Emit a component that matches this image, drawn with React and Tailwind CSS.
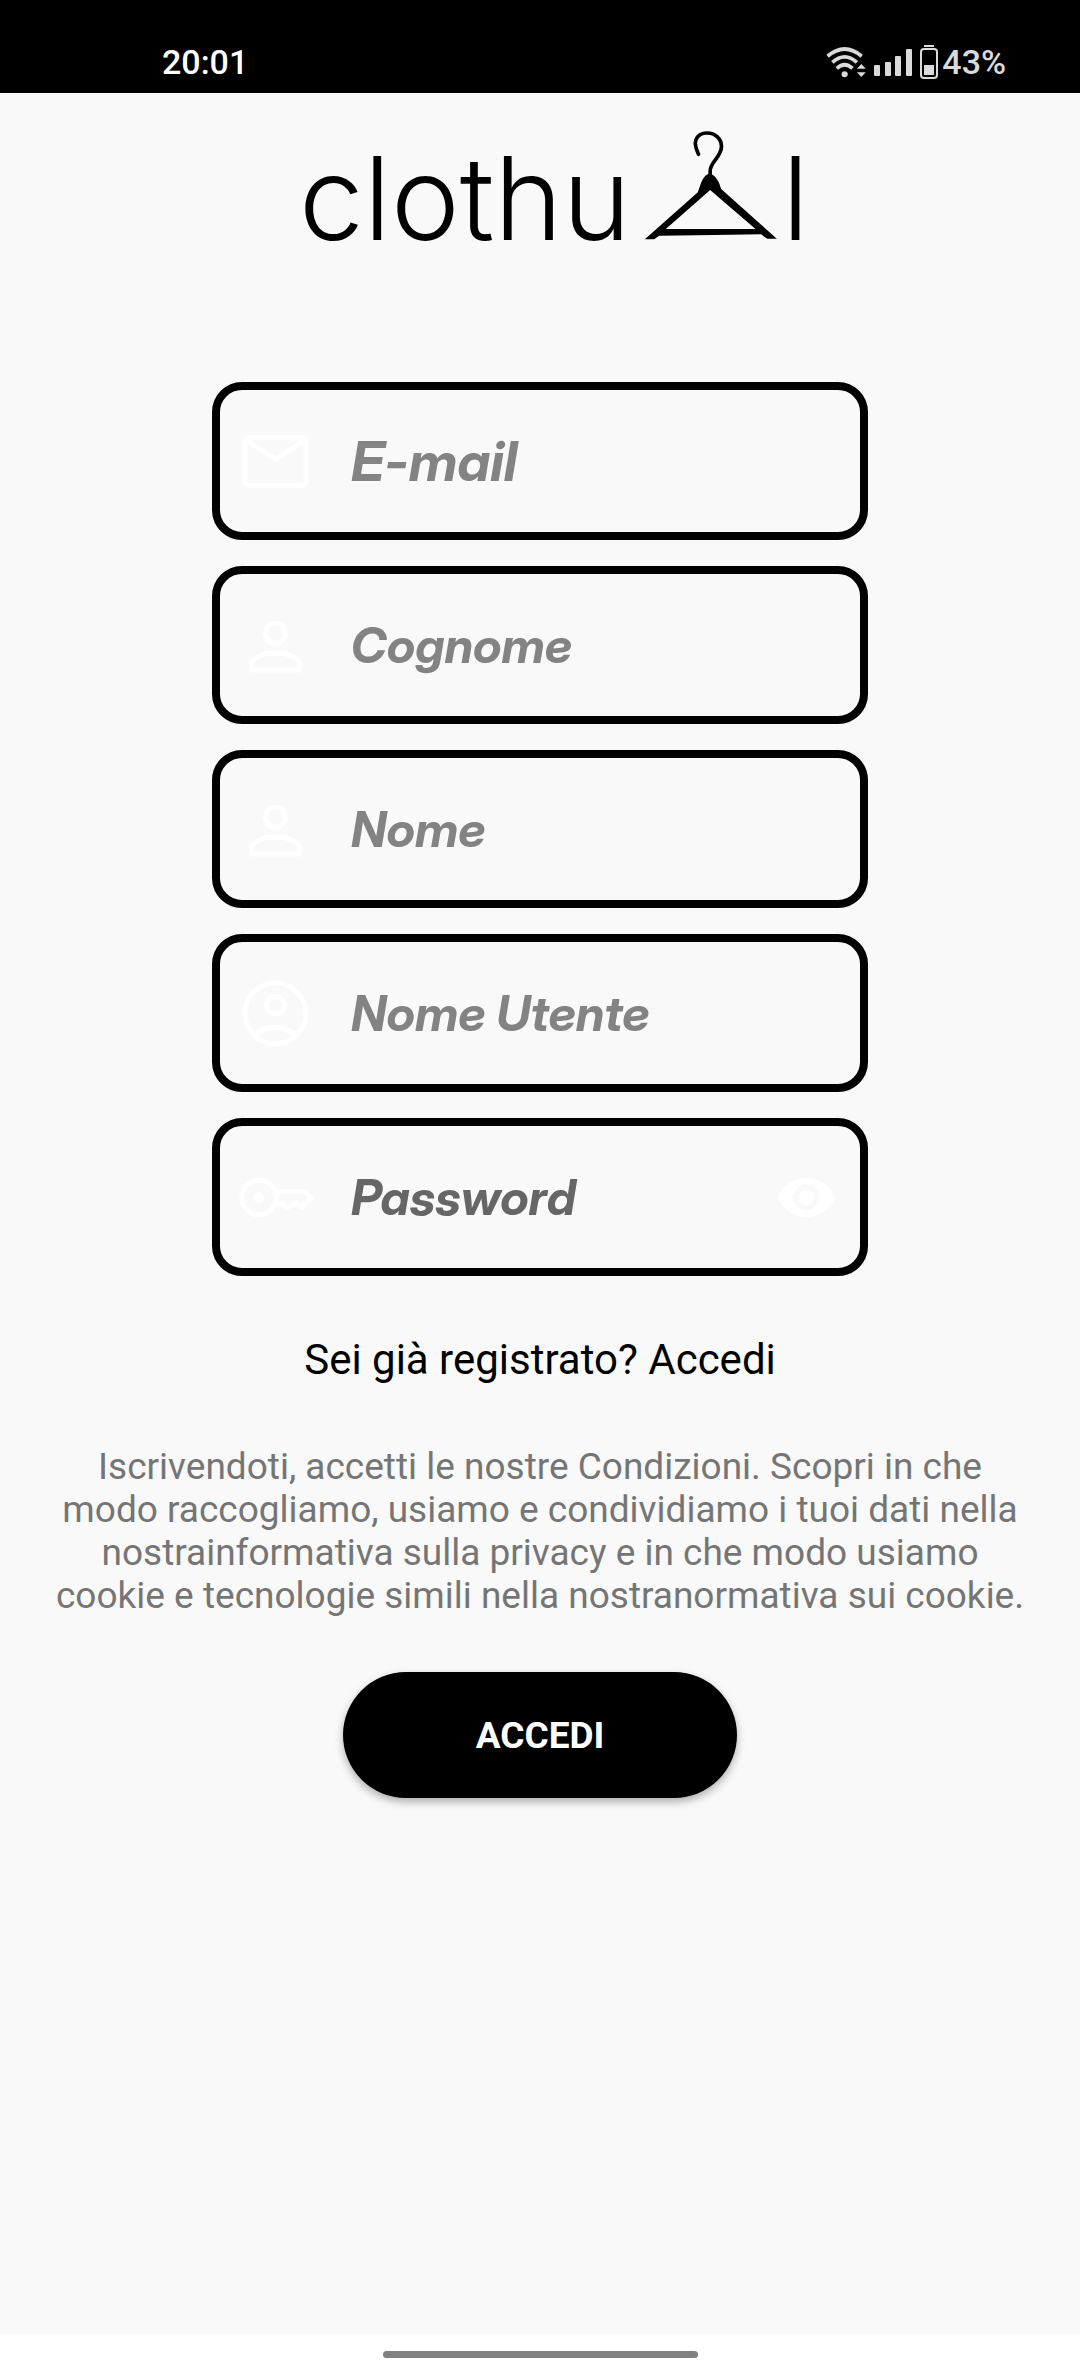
import { useState } from "react";
import { MdVisibility } from "react-icons/md";

function LineIcon({ className, children }) {
  return (
    <svg viewBox="0 0 24 24" fill="none" stroke="currentColor" strokeWidth="1.5" className={className} aria-hidden="true">
      {children}
    </svg>
  );
}

function MailIcon({ className }) {
  return (
    <LineIcon className={className}>
      <rect x="2.75" y="4.75" width="18.5" height="14.5" rx="1" />
      <path d="M3 5.500L12 11.300L21 5.500" />
    </LineIcon>
  );
}

function PersonIcon({ className }) {
  return (
    <LineIcon className={className}>
      <circle cx="12" cy="8.300" r="3.050" />
      <path d="M4.750 19.450V17.600C4.750 15.700 8.500 14.300 12 14.300S19.250 15.700 19.250 17.600V19.450Z" />
    </LineIcon>
  );
}

function AccountIcon({ className }) {
  return (
    <LineIcon className={className}>
      <circle cx="12" cy="12" r="9.250" />
      <circle cx="12" cy="9.450" r="2.700" />
      <path d="M5.700 18.500C9.300 15.400 14.700 15.400 18.300 18.500" />
    </LineIcon>
  );
}

function KeyIcon({ className }) {
  return (
    <LineIcon className={className}>
      <circle cx="7" cy="12" r="5.250" />
      <circle cx="7" cy="12" r="1.700" fill="currentColor" stroke="none" />
      <path d="M11.900 10.150H20.900L22.900 12.100L19.900 15L17.900 13.600L15.600 15L13.800 13.850H11.900" />
    </LineIcon>
  );
}

function Hanger({ className }) {
  return (
    <svg viewBox="0 0 400 330" className={className} aria-hidden="true">
      <path
        d="M164 73C157 58 152 42 156 30C162 14 176 9 190 9C214 9 233 26 233 50C232 82 200 94 199 122V140"
        fill="none"
        stroke="#000"
        strokeWidth="11"
        strokeLinecap="round"
      />
      <path
        fillRule="evenodd"
        d="M199 131C210 134 221 147 226 160L232 177L399 326H370L352 313L210 315L46 317L31 328H3L162 187C168 172 172 153 181 142C186 135 192 131 199 131ZM199 180L66 297H335Z"
      />
    </svg>
  );
}

function WifiIcon({ className }) {
  return (
    <svg viewBox="0 0 116 94" className={className} aria-hidden="true">
      <g fill="none" stroke="currentColor" strokeWidth="11">
        <path d="M4 30Q54-12 104 30" />
        <path d="M18 48Q54 16 90 48" />
        <path d="M31 66Q54 44 77 66" />
      </g>
      <circle cx="54" cy="83" r="9" fill="currentColor" />
      <path d="M90 67L103 53L116 67ZM90 77L103 91L116 77Z" fill="currentColor" />
    </svg>
  );
}

function SignalIcon({ className }) {
  return (
    <svg viewBox="0 0 38 27" fill="currentColor" className={className} aria-hidden="true">
      <rect x="0" y="16" width="6" height="11" rx="1" />
      <rect x="11" y="13" width="6" height="14" rx="1" />
      <rect x="21" y="7" width="6" height="20" rx="1" />
      <rect x="32" y="0" width="6" height="27" rx="1" />
    </svg>
  );
}

function BatteryIcon({ className }) {
  return (
    <svg viewBox="0 0 18 34" className={className} aria-hidden="true">
      <rect x="4" y="0" width="10" height="2" fill="currentColor" />
      <rect x="1" y="4" width="16" height="29" rx="3" fill="none" stroke="currentColor" strokeWidth="2" />
      <rect x="4" y="20" width="10" height="10" fill="currentColor" />
    </svg>
  );
}

const fields = [
  { id: "email", label: "E-mail", type: "email", Icon: MailIcon, text: "text-[55px] placeholder:text-[#838383]" },
  { id: "cognome", label: "Cognome", type: "text", Icon: PersonIcon, text: "text-[49px] placeholder:text-[#838383]" },
  { id: "nome", label: "Nome", type: "text", Icon: PersonIcon, text: "text-[49px] placeholder:text-[#838383]" },
  { id: "utente", label: "Nome Utente", type: "text", Icon: AccountIcon, text: "text-[49px] placeholder:text-[#838383]" },
  { id: "password", label: "Password", type: "password", Icon: KeyIcon, text: "text-[49px] placeholder:text-[#666666]" },
];

function Field({ id, label, type, Icon, text }) {
  const [visible, setVisible] = useState(false);
  const isPassword = type === "password";
  return (
    <div className="flex h-[158px] items-center rounded-[30px] border-8 border-black px-4">
      <label htmlFor={id} className="shrink-0 text-white">
        <Icon className="size-[79px]" />
      </label>
      <input
        id={id}
        type={isPassword && visible ? "text" : type}
        placeholder={label}
        aria-label={label}
        className={`ml-9 h-full min-w-0 flex-1 bg-transparent font-['Inter_Display','Inter',sans-serif] font-bold italic text-black outline-none placeholder:opacity-100 ${text}`}
      />
      {isPassword && (
        <button type="button" aria-label="Mostra password" onClick={() => setVisible(!visible)} className="mr-1.5 shrink-0 text-white">
          <MdVisibility className="size-[63px]" />
        </button>
      )}
    </div>
  );
}

export default function App() {
  return (
    <div className="flex min-h-screen flex-col bg-[#f9f9f9] font-['Roboto',sans-serif]">
      <header className="flex h-[93px] items-end justify-between bg-black pr-[74px] pb-[11px] pl-[162px] text-[34px] leading-[40px] font-medium text-white">
        <time>20:01</time>
        <div className="flex items-center text-[#dadada]">
          <WifiIcon className="h-8 w-10" />
          <SignalIcon className="ml-2 h-[27px] w-[38px]" />
          <BatteryIcon className="ml-2 h-[34px] w-[18px]" />
          <span className="ml-1">43%</span>
        </div>
      </header>

      <main className="flex flex-1 flex-col items-center px-10">
        <h1 className="mt-[37px] flex h-[110px] items-end pl-7 font-['Inter',sans-serif] text-[116px] leading-[84px] font-[350] text-black">
          <span>clothu</span>
          <Hanger className="mr-1 ml-3 h-[110px] w-[135px]" />
          <span>l</span>
        </h1>

        <form className="mt-[142px] flex w-full flex-col items-center" onSubmit={(e) => e.preventDefault()}>
          <div className="flex w-full max-w-[656px] flex-col gap-[26px]">
            {fields.map((f) => (
              <Field key={f.id} {...f} />
            ))}
          </div>

          <a href="#accedi" className="mt-[59px] text-[42px] leading-[50px] text-black">
            Sei già registrato? Accedi
          </a>

          <p className="mt-[60px] max-w-[980px] text-center text-[37px] leading-[43px] text-[#757575]">
            Iscrivendoti, accetti le nostre Condizioni. Scopri in che modo raccogliamo, usiamo e condividiamo i tuoi dati nella
            nostrainformativa sulla privacy e in che modo usiamo cookie e tecnologie simili nella nostranormativa sui cookie.
          </p>

          <button
            type="submit"
            className="mt-[55px] h-[126px] w-[394px] rounded-full bg-black pt-0.5 text-[37px] font-bold text-white shadow-[0_4px_8px_rgba(0,0,0,0.3)]"
          >
            ACCEDI
          </button>
        </form>
      </main>

      <footer className="flex h-[42px] justify-center bg-white pt-[17px]">
        <div className="h-[7px] w-[315px] rounded-full bg-[#808080]" />
      </footer>
    </div>
  );
}
